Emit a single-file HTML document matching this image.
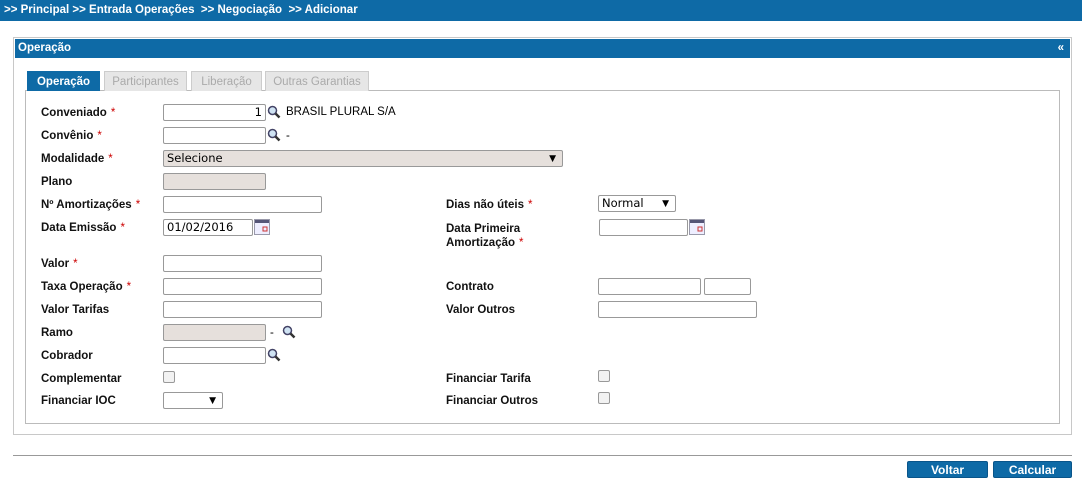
<!DOCTYPE html><html><head><meta charset="utf-8"><style>
body{margin:0;width:1082px;height:486px;background:#fff;font-family:"Liberation Sans",Arial,sans-serif;position:relative;overflow:hidden}
div,span,input{position:absolute;box-sizing:border-box}
.top{left:0;top:0;width:1082px;height:21px;background:#0e6aa6;color:#fff;font-weight:bold;font-size:11.5px;line-height:21px;padding-left:4px}
.panel{left:13px;top:37px;width:1059px;height:398px;border:1px solid #c8c8c8}
.hdr{left:15px;top:39px;width:1055px;height:19px;background:#0e6aa6;color:#fff;font-weight:bold;font-size:11.5px;line-height:19px;padding-left:3px}
.tab{top:71px;height:20px;font-size:11.5px;line-height:20px;text-align:center;color:#aaa;background:#e6e6e6;border:1px solid #ccc;border-bottom:none}
.box{left:25px;top:90px;width:1035px;height:334px;border:1px solid #bbb}
.l{font-size:11.5px;font-weight:bold;color:#111;margin-top:2px}
.l i{color:#c00;font-style:normal;font-weight:normal;margin-left:4px}
.in{height:17px;border:1px solid #999;border-radius:2px;background:#fff;font-size:11.5px;font-family:"DejaVu Sans",sans-serif;line-height:15px;padding:0 3px}
.dis{background:#e6e0dc}
.mag{width:14px;height:14px}
.cb{width:12px;height:12px;border:1px solid #999;border-radius:2px;background:#f2f2f2}
.btn{top:461px;height:17px;background:#0e6aa6;color:#fff;font-weight:bold;font-size:12px;text-align:center;line-height:17px;border-radius:2px;border:1px solid #09558a}
.arr{font-size:9px;right:6px;top:1px}
</style></head><body>
<div class="top">&gt;&gt; Principal &gt;&gt; Entrada Operações &nbsp;&gt;&gt; Negociação &nbsp;&gt;&gt; Adicionar</div>
<div class="panel"></div>
<div class="hdr">Operação<span style="right:6px;top:0">«</span></div>
<div class="box"></div>
<div class="tab" style="left:27px;width:73px;background:#0e6aa6;color:#fff;font-weight:bold;border-color:#0e6aa6">Operação</div>
<div class="tab" style="left:104px;width:83px">Participantes</div>
<div class="tab" style="left:191px;width:71px">Liberação</div>
<div class="tab" style="left:265px;width:104px">Outras Garantias</div>

<div class="l" style="left:41px;top:105px">Conveniado<i>*</i></div>
<div class="in" style="left:163px;top:104px;width:103px;text-align:right">1</div>
<svg class="mag" style="position:absolute;left:267px;top:105px" viewBox="0 0 14 14"><circle cx="5.5" cy="5.5" r="4" fill="#cfe3f3" stroke="#446" stroke-width="1.5"/><path d="M8.5 8.5l4 4" stroke="#333" stroke-width="2.5"/></svg>
<div style="left:286px;top:106px;font-size:11.5px">BRASIL PLURAL S/A</div>

<div class="l" style="left:41px;top:128px">Convênio<i>*</i></div>
<div class="in" style="left:163px;top:127px;width:103px"></div>
<svg class="mag" style="position:absolute;left:267px;top:128px" viewBox="0 0 14 14"><circle cx="5.5" cy="5.5" r="4" fill="#cfe3f3" stroke="#446" stroke-width="1.5"/><path d="M8.5 8.5l4 4" stroke="#333" stroke-width="2.5"/></svg>
<div style="left:286px;top:130px;font-size:11.5px">-</div>

<div class="l" style="left:41px;top:151px">Modalidade<i>*</i></div>
<div class="in dis" style="left:163px;top:150px;width:400px">Selecione<span class="arr">▼</span></div>

<div class="l" style="left:41px;top:174px">Plano</div>
<div class="in dis" style="left:163px;top:173px;width:103px"></div>

<div class="l" style="left:41px;top:197px">Nº Amortizações<i>*</i></div>
<div class="in" style="left:163px;top:196px;width:159px"></div>
<div class="l" style="left:446px;top:197px">Dias não úteis<i>*</i></div>
<div class="in" style="left:598px;top:195px;width:78px">Normal<span class="arr">▼</span></div>

<div class="l" style="left:41px;top:220px">Data Emissão<i>*</i></div>
<div class="in" style="left:163px;top:219px;width:90px">01/02/2016</div>
<svg style="position:absolute;left:254px;top:219px" width="16" height="16" viewBox="0 0 16 16"><rect x="0.5" y="0.5" width="15" height="15" fill="#eef" stroke="#99a"/><rect x="1" y="1" width="14" height="3" fill="#557"/><rect x="9" y="8" width="4" height="4" fill="none" stroke="#c33"/></svg>
<div class="l" style="left:446px;top:220px;line-height:14px">Data Primeira<br>Amortização<i>*</i></div>
<div class="in" style="left:599px;top:219px;width:89px"></div>
<svg style="position:absolute;left:689px;top:219px" width="16" height="16" viewBox="0 0 16 16"><rect x="0.5" y="0.5" width="15" height="15" fill="#eef" stroke="#99a"/><rect x="1" y="1" width="14" height="3" fill="#557"/><rect x="9" y="8" width="4" height="4" fill="none" stroke="#c33"/></svg>

<div class="l" style="left:41px;top:256px">Valor<i>*</i></div>
<div class="in" style="left:163px;top:255px;width:159px"></div>

<div class="l" style="left:41px;top:279px">Taxa Operação<i>*</i></div>
<div class="in" style="left:163px;top:278px;width:159px"></div>
<div class="l" style="left:446px;top:279px">Contrato</div>
<div class="in" style="left:598px;top:278px;width:103px"></div>
<div class="in" style="left:704px;top:278px;width:47px"></div>

<div class="l" style="left:41px;top:302px">Valor Tarifas</div>
<div class="in" style="left:163px;top:301px;width:159px"></div>
<div class="l" style="left:446px;top:302px">Valor Outros</div>
<div class="in" style="left:598px;top:301px;width:159px"></div>

<div class="l" style="left:41px;top:325px">Ramo</div>
<div class="in dis" style="left:163px;top:324px;width:103px"></div>
<div style="left:270px;top:327px;font-size:11.5px">-</div>
<svg class="mag" style="position:absolute;left:282px;top:325px" viewBox="0 0 14 14"><circle cx="5.5" cy="5.5" r="4" fill="#cfe3f3" stroke="#446" stroke-width="1.5"/><path d="M8.5 8.5l4 4" stroke="#333" stroke-width="2.5"/></svg>

<div class="l" style="left:41px;top:348px">Cobrador</div>
<div class="in" style="left:163px;top:347px;width:103px"></div>
<svg class="mag" style="position:absolute;left:267px;top:348px" viewBox="0 0 14 14"><circle cx="5.5" cy="5.5" r="4" fill="#cfe3f3" stroke="#446" stroke-width="1.5"/><path d="M8.5 8.5l4 4" stroke="#333" stroke-width="2.5"/></svg>

<div class="l" style="left:41px;top:371px">Complementar</div>
<div class="cb" style="left:163px;top:371px"></div>
<div class="l" style="left:446px;top:371px">Financiar Tarifa</div>
<div class="cb" style="left:598px;top:370px"></div>

<div class="l" style="left:41px;top:393px">Financiar IOC</div>
<div class="in" style="left:163px;top:392px;width:60px"><span class="arr">▼</span></div>
<div class="l" style="left:446px;top:393px">Financiar Outros</div>
<div class="cb" style="left:598px;top:392px"></div>

<div style="left:13px;top:455px;width:1059px;height:1px;background:#999"></div>
<div class="btn" style="left:907px;width:81px">Voltar</div>
<div class="btn" style="left:993px;width:79px">Calcular</div>
</body></html>
